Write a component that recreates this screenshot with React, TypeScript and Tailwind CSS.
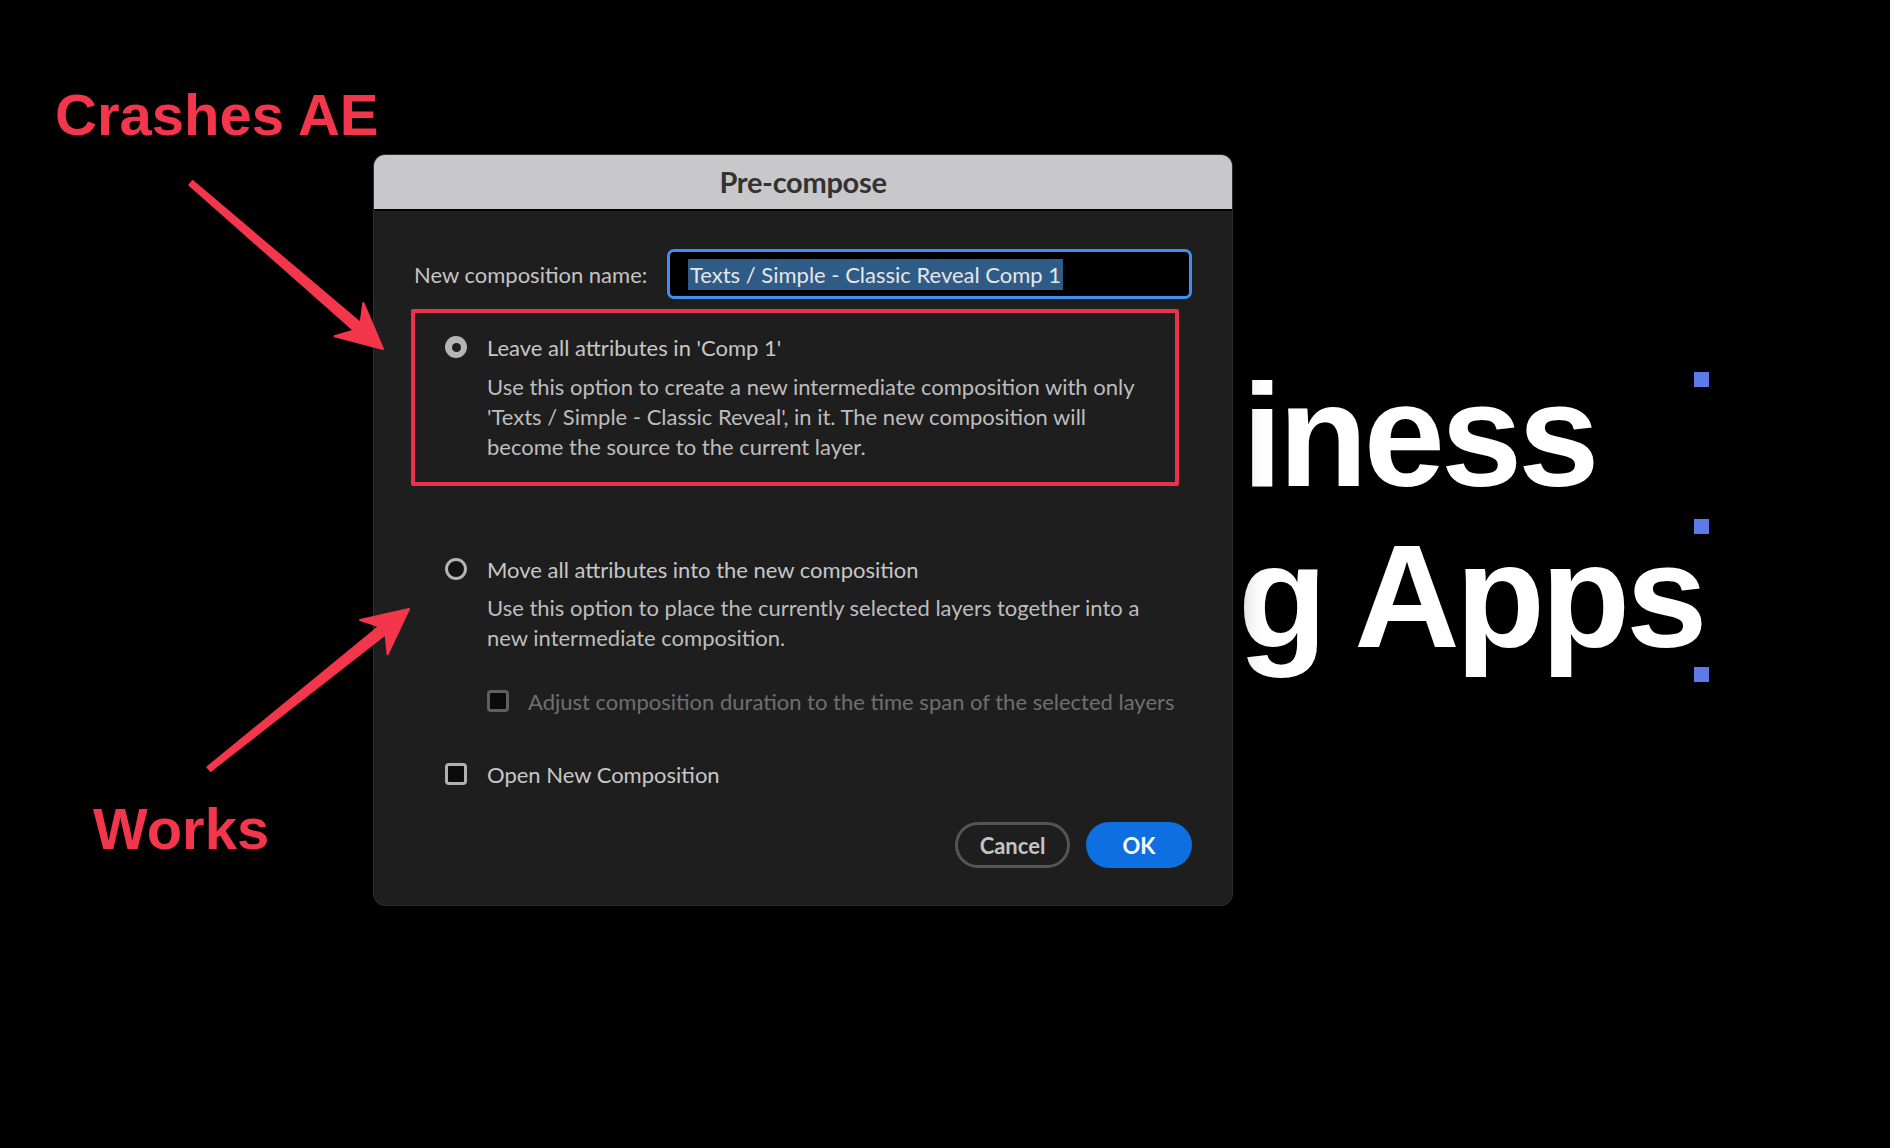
import React from 'react';

// arrow polygon: tapered shaft + triangular head, tail -> tip
function arrowPoints(tx: number, ty: number, hx: number, hy: number) {
  const dx = hx - tx;
  const dy = hy - ty;
  const len = Math.hypot(dx, dy);
  const ux = dx / len;
  const uy = dy / len;
  const nx = -uy;
  const ny = ux;
  const L = 45; // head length
  const H = 22; // head half width
  const notch = 34;
  const w0 = 2.5;
  const w1 = 5;
  const p = (a: number, b: number) => `${hx - ux * a + nx * b},${hy - uy * a + ny * b}`;
  return [
    `${tx + nx * w0},${ty + ny * w0}`,
    p(notch, w1),
    p(L, H),
    `${hx},${hy}`,
    p(L, -H),
    p(notch, -w1),
    `${tx - nx * w0},${ty - ny * w0}`,
  ].join(' ');
}

function Radio({ checked }: { checked?: boolean }) {
  return checked ? (
    <span className="flex items-center justify-center w-[22px] h-[22px] rounded-full bg-[#b5b5b5] shrink-0">
      <span className="w-[9px] h-[9px] rounded-full bg-[#1e1e1e]" />
    </span>
  ) : (
    <span className="w-[22px] h-[22px] rounded-full border-[3px] border-[#b5b5b5] bg-[#141414] shrink-0" />
  );
}

function Checkbox({ disabled }: { disabled?: boolean }) {
  return (
    <span
      className={
        disabled
          ? 'w-[22px] h-[22px] rounded-[4px] border-[3px] border-[#5f5f5f] bg-[#0b0b0b] shrink-0'
          : 'w-[22px] h-[22px] rounded-[4px] border-[3px] border-[#b0b0b0] bg-[#0b0b0b] shrink-0'
      }
    />
  );
}

export default function App() {
  return (
    <div
      className="relative w-full h-[1148px] bg-black overflow-hidden pl-[373px] pt-[154px]"
      style={{ fontFamily: 'Lato, "Open Sans", sans-serif' }}
    >
      {/* canvas text behind the dialog */}
      <div
        className="absolute left-[1242px] top-[363px] text-white font-bold text-[146px] leading-none tracking-[-4px] whitespace-nowrap"
        style={{ fontFamily: '"Liberation Sans", Arial, sans-serif' }}
      >
        iness
      </div>
      <div
        className="absolute left-[1238px] top-[524px] text-white font-bold text-[146px] leading-none tracking-[-4px] whitespace-nowrap"
        style={{ fontFamily: '"Liberation Sans", Arial, sans-serif' }}
      >
        g Apps
      </div>
      {/* selection handles */}
      <div className="absolute left-[1694px] top-[372px] w-[15px] h-[15px] bg-[#5b7ce8]" />
      <div className="absolute left-[1694px] top-[519px] w-[15px] h-[15px] bg-[#5b7ce8]" />
      <div className="absolute left-[1694px] top-[667px] w-[15px] h-[15px] bg-[#5b7ce8]" />

      {/* dialog */}
      <div className="relative z-10 w-[860px] h-[752px] rounded-[12px] bg-[#1e1e1e] border border-[#2e2e2e] overflow-hidden shadow-[0_0_30px_rgba(0,0,0,0.45)] flex flex-col">
        <div className="h-[56px] shrink-0 bg-[#c8c8ca] border-b-2 border-black flex items-center justify-center">
          <span className="text-[29px] font-bold text-[#333333] tracking-[-0.3px]">Pre-compose</span>
        </div>

        <div className="flex flex-col px-[40px] pt-[38px] pb-[39px] text-[22px] text-[#c6c6c6]">
          <div className="flex items-center justify-between h-[50px]">
            <span className="text-[#c4c4c4]">New composition name:</span>
            <div className="w-[525px] h-[50px] rounded-[7px] border-[3px] border-[#3f8ff0] bg-black flex items-center pl-[18px]">
              <span className="bg-[#2f5b87] text-[#e6e6e6] leading-[31px] px-[2px]">Texts / Simple - Classic Reveal Comp 1</span>
            </div>
          </div>

          <div className="ml-[31px] mt-[33px] flex items-center gap-[20px] h-[30px]">
            <Radio checked />
            <span>Leave all attributes in 'Comp 1'</span>
          </div>
          <div className="ml-[73px] mt-[10px] leading-[30px] text-[#bdbdbd]">
            <div>Use this option to create a new intermediate composition with only</div>
            <div>'Texts / Simple - Classic Reveal', in it. The new composition will</div>
            <div>become the source to the current layer.</div>
          </div>

          <div className="ml-[31px] mt-[92px] flex items-center gap-[20px] h-[30px]">
            <Radio />
            <span>Move all attributes into the new composition</span>
          </div>
          <div className="ml-[73px] mt-[9px] leading-[30px] text-[#bdbdbd]">
            <div>Use this option to place the currently selected layers together into a</div>
            <div>new intermediate composition.</div>
          </div>

          <div className="ml-[73px] mt-[33px] flex items-center gap-[19px] h-[30px] text-[#6f6f6f]">
            <Checkbox disabled />
            <span>Adjust composition duration to the time span of the selected layers</span>
          </div>

          <div className="ml-[31px] mt-[43px] flex items-center gap-[20px] h-[30px]">
            <Checkbox />
            <span>Open New Composition</span>
          </div>

          <div className="mt-[33px] flex justify-end gap-[16px]">
            <button className="w-[115px] h-[46px] rounded-full border-[3px] border-[#555555] text-[#c4c4c4] font-bold text-[22px]">
              Cancel
            </button>
            <button className="w-[106px] h-[46px] rounded-full bg-[#0e6fe1] text-white font-bold text-[22px]">
              OK
            </button>
          </div>
        </div>

        {/* annotation box */}
        <div className="absolute left-[37px] top-[154px] w-[768px] h-[177px] border-4 border-[#ea334b] rounded-[2px]" />
      </div>

      {/* annotations */}
      <div
        className="absolute left-[55px] top-[86px] text-[58px] font-bold leading-none text-[#f4364c] whitespace-nowrap"
        style={{ fontFamily: '"Liberation Sans", Arial, sans-serif' }}
      >
        Crashes AE
      </div>
      <div
        className="absolute left-[93px] top-[800px] text-[58px] font-bold leading-none text-[#f4364c] whitespace-nowrap"
        style={{ fontFamily: '"Liberation Sans", Arial, sans-serif' }}
      >
        Works
      </div>
      <svg className="absolute left-0 top-0 z-20 pointer-events-none" width="1890" height="1148">
        <polygon points={arrowPoints(191, 183, 383, 349)} fill="#f4364c" stroke="#f4364c" strokeWidth="2" strokeLinejoin="round" />
        <polygon points={arrowPoints(209, 769, 409, 609)} fill="#f4364c" stroke="#f4364c" strokeWidth="2" strokeLinejoin="round" />
      </svg>
    </div>
  );
}
